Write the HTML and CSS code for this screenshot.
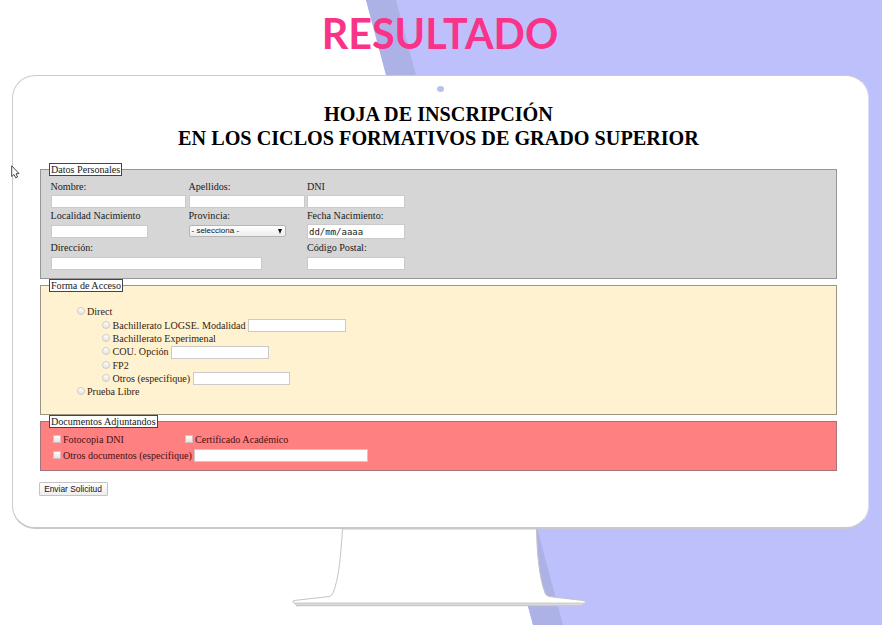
FILE: index.html
```html
<!DOCTYPE html>
<html lang="es">
<head>
<meta charset="utf-8">
<title>Resultado</title>
<link rel="stylesheet" href="styles.css">
</head>
<body>
<svg class="backdrop" viewBox="0 0 882 625" aria-hidden="true">
  <path d="M366 0H882V625H533Z" fill="#bec0fc"/>
  <path d="M366 0H396L563 625H533Z" fill="#acb2e6"/>
</svg>
<main class="slide">
  <h1 class="title">RESULTADO</h1>
  <section class="screen">
    <span class="camera"></span>
    <h2 class="heading">HOJA DE INSCRIPCIÓN<br>EN LOS CICLOS FORMATIVOS DE GRADO SUPERIOR</h2>
    <form class="form">
      <fieldset class="group personal">
        <legend>Datos Personales</legend>
        <div class="fields">
          <label class="field top">Nombre:<input class="w-name"></label>
          <label class="field top">Apellidos:<input class="w-surname"></label>
          <label class="field top">DNI<input></label>
          <label class="field">Localidad Nacimiento<input></label>
          <label class="field">Provincia:<span class="select">- selecciona -<i></i></span></label>
          <label class="field">Fecha Nacimiento:<input class="date" value="dd/mm/aaaa"></label>
          <label class="field wide">Dirección:<input class="w-address"></label>
          <label class="field">Código Postal:<input></label>
        </div>
      </fieldset>
      <fieldset class="group access">
        <legend>Forma de Acceso</legend>
        <ul class="options">
          <li><label class="option"><input type="radio">Direct</label>
            <ul>
              <li><label class="option"><input type="radio">Bachillerato LOGSE. Modalidad</label><input></li>
              <li><label class="option"><input type="radio">Bachillerato Experimenal</label></li>
              <li><label class="option"><input type="radio">COU. Opción</label><input></li>
              <li><label class="option"><input type="radio">FP2</label></li>
              <li><label class="option"><input type="radio">Otros (especifique)</label><input></li>
            </ul>
          </li>
          <li><label class="option"><input type="radio">Prueba Libre</label></li>
        </ul>
      </fieldset>
      <fieldset class="group documents">
        <legend>Documentos Adjuntandos</legend>
        <div class="checks">
          <label class="option first"><input type="checkbox">Fotocopia DNI</label>
          <label class="option"><input type="checkbox">Certificado Académico</label>
        </div>
        <div class="checks">
          <label class="option"><input type="checkbox">Otros documentos (especifique)</label><input class="w-other">
        </div>
      </fieldset>
      <button type="button" class="submit">Enviar Solicitud</button>
    </form>
  </section>
  <svg class="stand" viewBox="0 0 296 80" aria-hidden="true">
    <path d="M51.500 0C50 24 48 50 42 64Q41 67 38 67.500L3 71.500Q0 73 4 74L5 76H291L294 74Q296 72 292 71.500L258 67.500Q255 67 254 64C248 48 246 24 245.500 0Z" fill="#fff" stroke="#c4c4c6"/>
    <path d="M3 74.200H293" stroke="#d0d0d2" stroke-width="1.500"/>
    <path d="M5 76.500H290" stroke="#c8c8ca" stroke-width="1.400"/>
  </svg>
</main>
<svg class="cursor" viewBox="0 0 9 14" aria-hidden="true">
  <path d="M.7.8V11.500L3 9.500L4.700 12.800L6.500 12L5 8.800L8 8.500Z" fill="#fff" stroke="#333" stroke-width=".9"/>
</svg>
</body>
</html>
```
FILE: styles.css
```css
* { box-sizing: border-box; }
body {
  margin: 0;
  width: 882px;
  height: 625px;
  overflow: hidden;
  background: #fff;
  font: 10.1px/12px "Liberation Serif", serif;
  color: #202020;
}
.backdrop { position: absolute; inset: 0; width: 882px; height: 625px; }
.slide { position: relative; height: 625px; }
.title {
  height: 75px;
  margin: 0;
  padding: 8px 2px 0 0;
  text-align: center;
  font: 700 41.3px/50px Lato, sans-serif;
  color: #f9338a;
}
.screen {
  display: flow-root;
  width: 857px;
  height: 454px;
  margin-left: 11.5px;
  padding: 10px 31px 0 28px;
  background: #fff;
  border: 1px solid #cbcbcf;
  border-right-color: #dcdcf4;
  border-bottom: 2px solid #c9c9cd;
  border-radius: 23px;
}
.camera {
  display: block;
  width: 7px;
  height: 6px;
  margin: 0 0 0 396px;
  border-radius: 50%;
  background: #bbc0e8;
}
.heading {
  margin: 11px 0 0;
  text-align: center;
  font: 700 20.2px/23.5px "Liberation Serif", serif;
  color: #000;
  white-space: nowrap;
}
.form { margin-top: 13px; margin-left: -1px; }
.group {
  width: 797px;
  min-width: 0;
  margin: 0;
  padding: 0 0 0 10px;
  border: 1px solid #969696;
}
legend {
  height: 13px;
  margin-left: -2px;
  padding: 0 1px 0 1.500px;
  border: 1px solid #444;
  background: #fff;
  line-height: 11px;
}
.personal { height: 116px; background: #d6d6d6; }
.access { height: 136px; background: #fff2d0; border-color: #9c9584; color: #351c10; }
.documents { height: 56px; background: #ff8080; border-color: #a87478; color: #481014; }
legend { color: #202020; }
input {
  appearance: none;
  display: block;
  width: 97.500px;
  height: 13px;
  margin: 0;
  padding: 0 2px;
  border: 1px solid #cacaca;
  border-radius: 0;
  background: #fff;
}
.fields {
  display: grid;
  grid-template-columns: 138px 118.5px 98px;
  grid-template-rows: 30px 31.5px 28px;
  padding-top: 4px;
}
.field { display: flex; flex-direction: column; gap: 3px; white-space: nowrap; }
.top { gap: 2px; padding-top: 1px; }
.wide { grid-column: span 2; }
.w-name { width: 135.500px; }
.w-surname { width: 116.500px; }
.w-address { width: 211.500px; }
.w-other { width: 174px; }
.date {
  height: 15px;
  margin-top: -1px;
  padding: 0 1px;
  font: 9px/13px "DejaVu Sans Mono", monospace;
  color: #222;
}
.select {
  display: flex;
  align-items: center;
  justify-content: space-between;
  width: 97px;
  height: 12px;
  padding: 0 3px 0 2px;
  border: 1px solid #b5b5b5;
  border-radius: 2px;
  background: linear-gradient(#fff, #ededed);
  font: 8px/10px "Liberation Sans", sans-serif;
  color: #111;
}
.select i { border: 2.5px solid transparent; border-top: 5px solid #111; border-bottom: 0; }
.options, .options ul { margin: 0; padding: 0; list-style: none; }
.options { padding: 13.500px 0 0 26px; }
.options ul { padding-left: 25.500px; }
.options ul li { display: flex; align-items: center; gap: 2.500px; height: 13.350px; }
.option { display: flex; align-items: center; height: 13.350px; white-space: nowrap; }
.options .option { gap: 2.500px; }
input[type="radio"], input[type="checkbox"] {
  flex: none;
  width: 8px;
  height: 8px;
  margin-top: -2px;
  padding: 0;
  border-color: #d0cbc4;
  background: linear-gradient(#fff, #e6e3e0);
}
input[type="radio"] { border-radius: 50%; }
.documents input[type="checkbox"] { border-color: #e2b8b8; }
.checks { display: flex; align-items: center; gap: 2px; height: 15.500px; padding-left: 2px; }
.checks:first-of-type { margin-top: 4.500px; }
.checks .option { gap: 2.500px; }
.checks .first { width: 130px; }
.submit {
  display: block;
  width: 69px;
  height: 14px;
  margin: 11px 0 0 -1px;
  padding: 0;
  border: 1px solid #c4c4c4;
  border-radius: 1px;
  background: linear-gradient(#fff, #eee);
  font: 8.400px/12px "Liberation Sans", sans-serif;
  color: #111;
}
.stand { display: block; width: 296px; height: 80px; margin: 0 0 0 291px; }
.cursor { position: absolute; left: 11px; top: 165px; width: 9px; height: 14px; }
```
